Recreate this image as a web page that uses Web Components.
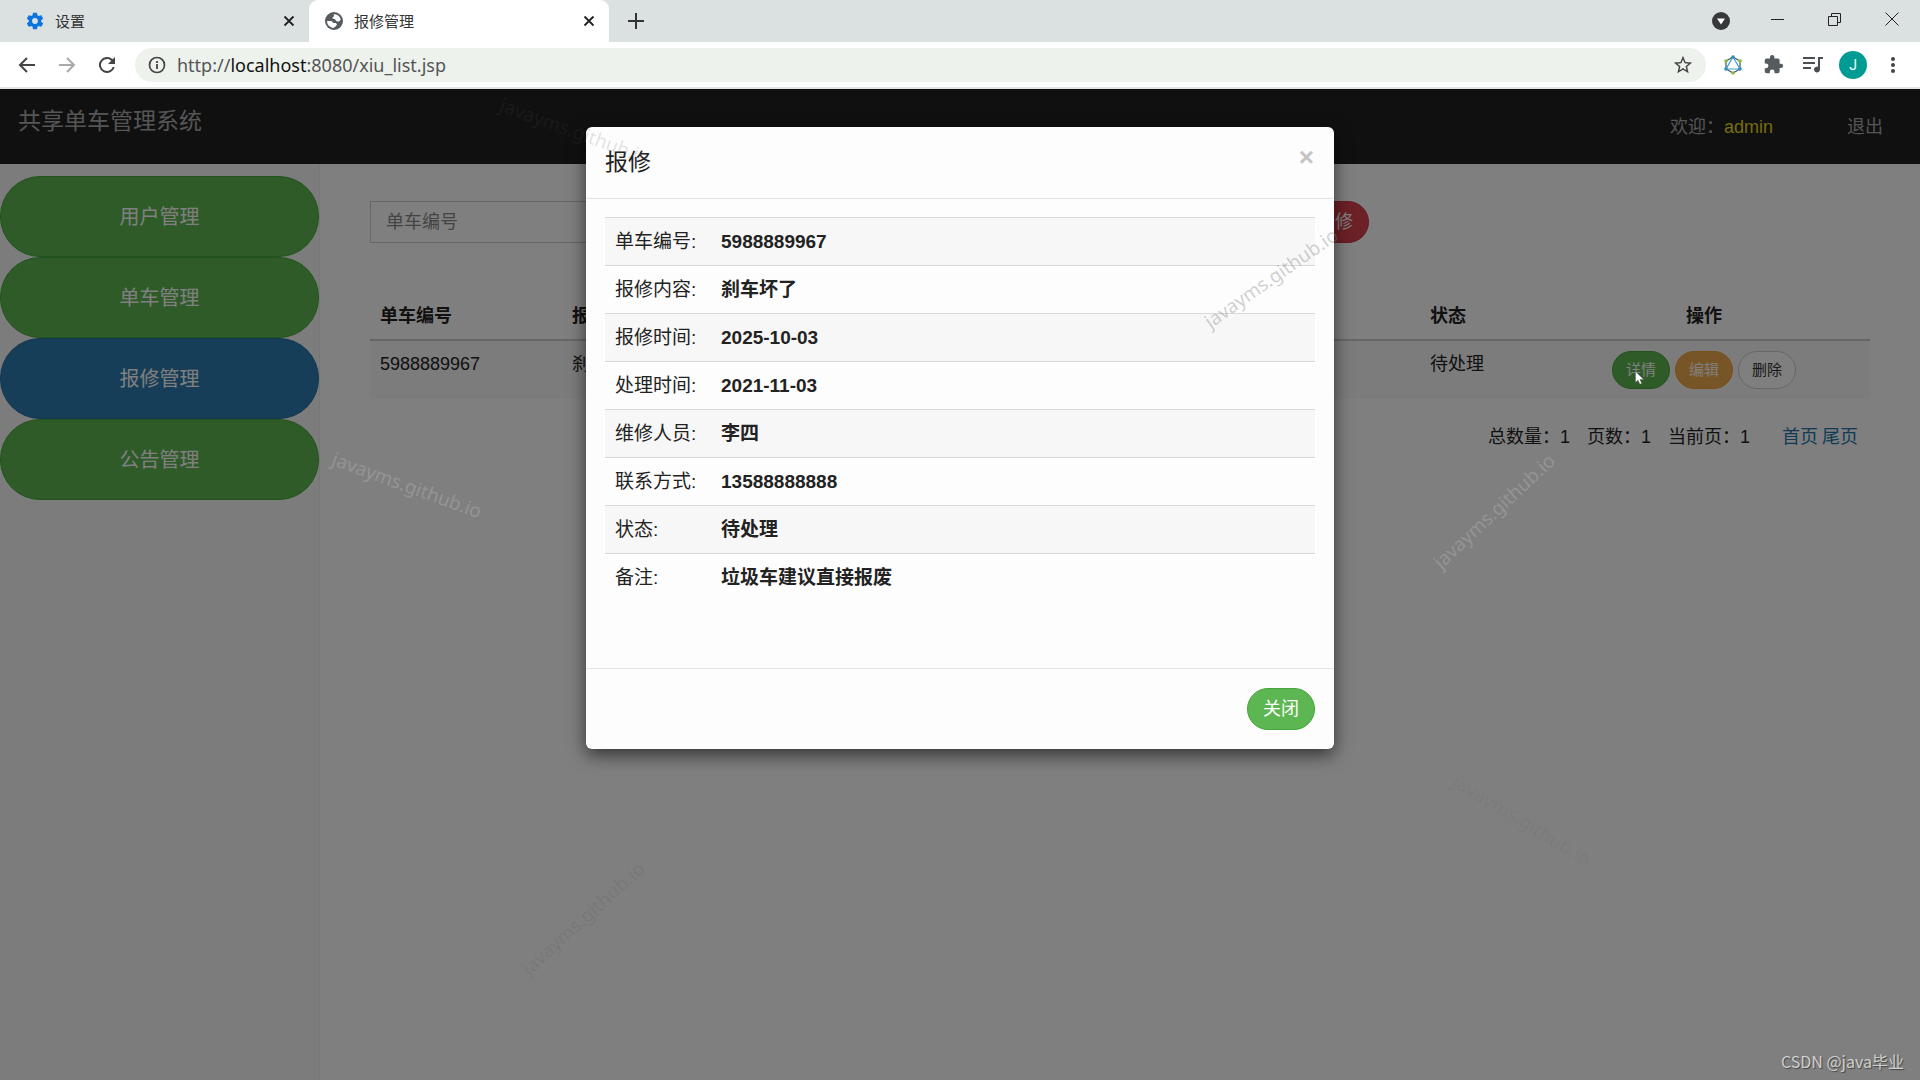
<!DOCTYPE html>
<html lang="zh-CN">
<head>
<meta charset="utf-8">
<title>报修管理</title>
<style>
  body {
    margin: 0;
    font-family: "Liberation Sans", "Noto Sans CJK SC", sans-serif;
    font-size: 18px;
    line-height: 26px;
    color: #222;
  }
</style>
</head>
<body>
<browser-window>
  <browser-tabs slot="tabs"></browser-tabs>
  <browser-toolbar slot="toolbar"></browser-toolbar>
  <bike-app>
    <top-bar slot="top" user="admin">共享单车管理系统</top-bar>
    <side-menu slot="side">
      <menu-item>用户管理</menu-item>
      <menu-item>单车管理</menu-item>
      <menu-item active>报修管理</menu-item>
      <menu-item>公告管理</menu-item>
    </side-menu>
    <search-bar></search-bar>
    <repair-list></repair-list>
    <page-nav></page-nav>
  </bike-app>
  <modal-dialog slot="modal" heading="报修">
    <repair-detail></repair-detail>
  </modal-dialog>
</browser-window>
<water-marks></water-marks>

<script>
const BUTTON_CSS = /* html */`
  button {
    font: inherit;
    color: #fff;
    background: #5cb651;
    border: 1px solid #44a63a;
    border-radius: 22px;
    padding: 7px 15px;
    line-height: 26px;
    cursor: pointer;
  }
`;

// Clase base: crea el shadow root a partir del método html()
class BaseElement extends HTMLElement {
  constructor() {
    super();
    this.attachShadow({ mode: "open" });
  }

  connectedCallback() {
    const template = document.createElement("template");
    template.innerHTML = this.html();
    this.shadowRoot.replaceChildren(template.content.cloneNode(true));
  }
}

class BrowserWindow extends BaseElement {
  html() {
    return /* html */`
      <style>
        :host { display: flex; flex-direction: column; min-height: 100vh; }
        .page { position: relative; flex: 1; display: flex; flex-direction: column; }
        .page ::slotted(bike-app) { flex: 1; }
        .backdrop {
          position: absolute;
          inset: 0;
          background: rgba(0, 0, 0, .5);
          padding-top: 38px;
        }
      </style>
      <slot name="tabs"></slot>
      <slot name="toolbar"></slot>
      <div class="page">
        <slot></slot>
        <div class="backdrop"><slot name="modal"></slot></div>
      </div>
    `;
  }
}

class BrowserTabs extends BaseElement {
  html() {
    const close = `<button aria-label="关闭标签页"><svg width="12" height="12" viewBox="0 0 12 12"><path d="M1.500 1.500l9 9m0-9l-9 9" stroke="#222" stroke-width="1.800" fill="none"/></svg></button>`;
    return /* html */`
      <style>
        :host {
          display: flex;
          height: 42px;
          background: #dbe1e1;
          font: 15px/20px "Noto Sans", "Noto Sans CJK SC", sans-serif;
          color: #333;
        }
        svg { display: block; }
        button { border: 0; padding: 0; background: none; display: grid; place-items: center; }
        .tab { display: flex; align-items: center; box-sizing: border-box; padding: 0 14px 0 15px; gap: 10px; }
        .tab span { flex: 1; }
        .tab svg { flex: none; }
        .idle { width: 309px; padding-left: 25px; }
        .active { width: 300px; background: #fff; border-radius: 9px 9px 0 0; }
        .new { width: 54px; }
        .window { margin-left: auto; display: flex; align-items: center; }
        .window button { width: 57px; height: 36px; }
      </style>
      <div class="tab idle">
        <svg width="20" height="20" viewBox="0 0 24 24"><path fill="#0b74de" d="M19.430 12.980c.040-.320.070-.640.070-.980s-.030-.660-.070-.980l2.110-1.650c.190-.150.240-.420.120-.640l-2-3.460c-.120-.220-.390-.300-.610-.220l-2.490 1c-.520-.400-1.080-.730-1.690-.980l-.380-2.650C14.460 2.180 14.250 2 14 2h-4c-.250 0-.460.180-.490.420l-.380 2.650c-.610.250-1.170.590-1.690.980l-2.490-1c-.230-.090-.490 0-.610.220l-2 3.460c-.130.220-.070.490.120.640l2.110 1.650c-.040.320-.070.650-.070.980s.030.660.070.980l-2.110 1.650c-.190.150-.240.420-.120.640l2 3.460c.120.220.390.300.610.220l2.490-1c.520.400 1.080.730 1.690.980l.380 2.650c.030.240.240.420.490.420h4c.250 0 .460-.180.490-.420l.380-2.650c.610-.250 1.170-.590 1.690-.980l2.490 1c.230.090.490 0 .610-.220l2-3.460c.120-.220.070-.490-.120-.640l-2.110-1.650zM12 15.500A3.500 3.500 0 1 1 12 8.500a3.500 3.500 0 0 1 0 7z"/></svg>
        <span>设置</span>${close}
      </div>
      <div class="tab active">
        <svg width="20" height="20" viewBox="0 0 20 20"><circle cx="10" cy="10" r="9" fill="#555b5e"/><path fill="#fff" d="M3 10h4.500l2 2H12l1 1.500-1.500 2L9.500 17A7 7 0 0 1 3 10zM9.500 3.200a7 7 0 0 1 7.300 5.300l-1.800 2-2.500-.300-1.500-2L8.500 7.500 8.800 6l1.500-.800z"/></svg>
        <span>报修管理</span>${close}
      </div>
      <button class="new" aria-label="新标签页"><svg width="16" height="16" viewBox="0 0 16 16"><path d="M8 0v16M0 8h16" stroke="#333" stroke-width="2"/></svg></button>
      <div class="window">
        <button aria-label="搜索标签页"><svg width="18" height="18" viewBox="0 0 18 18"><circle cx="9" cy="9" r="9" fill="#36393c"/><path d="M5 6.500h8L9 12.500z" fill="#fff"/></svg></button>
        <button aria-label="最小化"><svg width="14" height="14" viewBox="0 0 14 14"><path d="M0 5.500h13" stroke="#222"/></svg></button>
        <button aria-label="还原"><svg width="14" height="16" viewBox="0 0 14 16"><path d="M.5 3.500h9v9h-9zM3.500 3V.5h9v9H10" fill="none" stroke="#222"/></svg></button>
        <button aria-label="关闭"><svg width="14" height="18" viewBox="0 0 14 18"><path d="M.5.5l13 13m0-13l-13 13" stroke="#222"/></svg></button>
      </div>
    `;
  }
}

class BrowserToolbar extends BaseElement {
  html() {
    return /* html */`
      <style>
        :host {
          display: flex;
          align-items: center;
          height: 45px;
          padding: 0 7px;
          background: #fff;
          border-bottom: 2px solid #e2e4e4;
          font: 18px/24px "Noto Sans", "Noto Sans CJK SC", sans-serif;
        }
        svg { display: block; }
        button { width: 40px; height: 34px; border: 0; padding: 0; background: none; display: grid; place-items: center; }
        .address {
          flex: 1;
          display: flex;
          align-items: center;
          height: 34px;
          margin: 0 7px 0 8px;
          padding-left: 13px;
          background: #edf2ed;
          border-radius: 17px;
        }
        .url { flex: 1; margin-left: 11px; color: #555; }
        .url b { font-weight: 400; color: #111; }
        .address button { width: 46px; }
        .avatar { width: 28px; height: 28px; border-radius: 50%; background: #009c94; color: #fff; font: 14px/28px Roboto, sans-serif; text-align: center; }
      </style>
      <button aria-label="后退"><svg width="18" height="18" viewBox="0 0 18 18"><path d="M17 9H2m7-7L2 9l7 7" fill="none" stroke="#444" stroke-width="2"/></svg></button>
      <button aria-label="前进"><svg width="18" height="18" viewBox="0 0 18 18"><path d="M1 9h15M9 2l7 7-7 7" fill="none" stroke="#aaa" stroke-width="2"/></svg></button>
      <button aria-label="刷新"><svg width="24" height="24" viewBox="0 0 24 24"><path fill="#444" d="M17.650 6.350A8 8 0 1 0 19.730 14h-2.080A6 6 0 1 1 12 6c1.660 0 3.140.690 4.220 1.780L13 11h7V4z"/></svg></button>
      <div class="address">
        <svg width="18" height="18" viewBox="0 0 18 18"><circle cx="9" cy="9" r="7.500" fill="none" stroke="#444" stroke-width="1.700"/><path d="M9 8v5M9 5v2" stroke="#444" stroke-width="1.800"/></svg>
        <span class="url">http://<b>localhost</b>:8080/xiu_list.jsp</span>
        <button aria-label="收藏"><svg width="22" height="22" viewBox="0 0 24 24"><path fill="#444" d="M22 9.240l-7.190-.620L12 2 9.190 8.630 2 9.240l5.460 4.730L5.820 21 12 17.270 18.180 21l-1.630-7.030zM12 15.400l-3.760 2.270 1-4.280-3.320-2.880 4.380-.380L12 6.100l1.710 4.040 4.380.380-3.320 2.880 1 4.280z"/></svg></button>
      </div>
      <button aria-label="扩展"><svg width="20" height="20" viewBox="0 0 20 20"><path d="M10 2l7 4v8l-7 4-7-4V6z" fill="none" stroke="#43515c" stroke-width="1.200"/><path d="M10 2l7 12H3z" fill="none" stroke="#3a9fd0" stroke-width="1.200"/><g fill="#2b8fc4"><circle cx="10" cy="2" r="1.800"/><circle cx="3" cy="14" r="1.800"/><circle cx="17" cy="14" r="1.800"/></g><g fill="#83bf3f"><circle cx="3" cy="6" r="1.800"/><circle cx="17" cy="6" r="1.800"/><circle cx="10" cy="18" r="1.800"/></g></svg></button>
      <button aria-label="扩展程序"><svg width="21" height="21" viewBox="0 0 24 24"><path fill="#555b5e" d="M20.500 11H19V7a2 2 0 0 0-2-2h-4V3.500a2.500 2.500 0 0 0-5 0V5H4a2 2 0 0 0-2 2v3.800h1.500a2.700 2.700 0 0 1 0 5.400H2V20a2 2 0 0 0 2 2h3.800v-1.500a2.700 2.700 0 0 1 5.400 0V22H17a2 2 0 0 0 2-2v-4h1.500a2.500 2.500 0 0 0 0-5z"/></svg></button>
      <button aria-label="媒体控件"><svg width="20" height="18" viewBox="0 0 20 18"><path d="M0 2h12M0 7h12M0 12h8" stroke="#4a4f52" stroke-width="2"/><path d="M20 1v2h-3v10.500a3 3 0 1 1-2-2.800V1z" fill="#4a4f52"/></svg></button>
      <button aria-label="用户"><div class="avatar">J</div></button>
      <button aria-label="更多"><svg width="4" height="18" viewBox="0 0 4 18"><g fill="#444"><circle cx="2" cy="3" r="2"/><circle cx="2" cy="9" r="2"/><circle cx="2" cy="15" r="2"/></g></svg></button>
    `;
  }
}

class BikeApp extends BaseElement {
  html() {
    return /* html */`
      <style>
        :host { display: flex; flex-direction: column; background: #fff; }
        .body { flex: 1; display: flex; }
        main { flex: 1; padding: 37px 50px 0; }
      </style>
      <slot name="top"></slot>
      <div class="body">
        <slot name="side"></slot>
        <main><slot></slot></main>
      </div>
    `;
  }
}

class TopBar extends BaseElement {
  html() {
    return /* html */`
      <style>
        :host {
          display: flex;
          justify-content: space-between;
          height: 75px;
          padding: 0 37px 0 18px;
          background: #202020;
          color: #aaa;
        }
        .brand { font-size: 23px; line-height: 64px; }
        .user { display: flex; gap: 74px; line-height: 76px; }
        a { color: inherit; text-decoration: none; }
        b { font-weight: 400; color: #e8d820; }
      </style>
      <span class="brand"><slot></slot></span>
      <div class="user">
        <span>欢迎：<b>${this.getAttribute("user")}</b></span>
        <a href="#">退出</a>
      </div>
    `;
  }
}

class SideMenu extends BaseElement {
  html() {
    return /* html */`
      <style>
        :host {
          display: flex;
          flex-direction: column;
          box-sizing: border-box;
          width: 320px;
          padding-top: 12px;
          background: #f8f8f8;
          border-right: 1px solid #eee;
        }
      </style>
      <slot></slot>
    `;
  }
}

class MenuItem extends BaseElement {
  html() {
    return /* html */`
      <style>
        :host { display: block; }
        a {
          display: block;
          border: 1px solid #44a63a;
          border-radius: 40px;
          background: #5eb650;
          color: #fff;
          font-size: 20px;
          line-height: 77px;
          padding-top: 2px;
          text-align: center;
          text-decoration: none;
        }
        :host([active]) a { background: #2c7cb0; border-color: #2670a0; }
      </style>
      <a href="#"><slot></slot></a>
    `;
  }
}

class SearchBar extends BaseElement {
  html() {
    return /* html */`
      <style>
        :host { display: flex; justify-content: space-between; width: 999px; }
        ${BUTTON_CSS}
        button { background: #d9434f; border-color: #cc3644; }
        input {
          box-sizing: border-box;
          width: 320px;
          height: 42px;
          padding: 0 15px;
          border: 1px solid #ccc;
          font: inherit;
        }
        input::placeholder { color: #888; }
      </style>
      <input type="text" placeholder="单车编号" aria-label="单车编号">
      <button>报修</button>
    `;
  }
}

class RepairList extends BaseElement {
  html() {
    return /* html */`
      <style>
        :host { display: block; margin-top: 50px; }
        table { width: 100%; border-collapse: collapse; table-layout: fixed; }
        th, td { padding: 10px; text-align: left; vertical-align: top; }
        th { border-bottom: 2px solid #ccc; }
        td { background: #f9f9f9; }
        .id { width: 172px; }
        .state { width: 98px; }
        .actions { width: 312px; text-align: center; }
        ${BUTTON_CSS}
        button { font-size: 15px; line-height: 24px; padding: 6px 13px; border-radius: 19px; }
        .edit { background: #f0ab4c; border-color: #eea236; }
        .delete { background: #fff; border-color: #ccc; color: #333; }
        .group { display: flex; justify-content: center; gap: 5px; }
      </style>
      <table>
        <thead>
          <tr><th class="id">单车编号</th><th>报修内容</th><th class="state">状态</th><th class="actions">操作</th></tr>
        </thead>
        <tbody>
          <tr>
            <td>5988889967</td><td>刹车坏了</td><td>待处理</td>
            <td><div class="group"><button>详情</button><button class="edit">编辑</button><button class="delete">删除</button></div></td>
          </tr>
        </tbody>
      </table>
    `;
  }
}

class PageNav extends BaseElement {
  html() {
    return /* html */`
      <style>
        :host { display: flex; justify-content: flex-end; gap: 17px; padding: 25px 12px 0 0; }
        nav { display: flex; gap: 4px; padding-left: 15px; }
        a { color: #2277a8; text-decoration: none; }
      </style>
      <span>总数量：1</span>
      <span>页数：1</span>
      <span>当前页：1</span>
      <nav><a href="#">首页</a><a href="#">尾页</a></nav>
    `;
  }
}

class ModalDialog extends BaseElement {
  html() {
    return /* html */`
      <style>
        :host {
          display: block;
          width: 748px;
          margin: 0 auto;
          background: #fdfdfd;
          border-radius: 6px;
          box-shadow: 0 6px 18px rgba(0, 0, 0, .6);
        }
        header, footer { display: flex; justify-content: space-between; padding: 19px; }
        header { border-bottom: 1px solid #e5e5e5; }
        h4 { margin: 0; font-size: 23px; line-height: 33px; font-weight: 400; }
        .close { border: 0; padding: 0 1px; background: none; color: #c4c4c4; font: bold 26px/22px "Liberation Sans", sans-serif; align-self: flex-start; }
        section { padding: 18px 19px 67px; }
        footer { border-top: 1px solid #e5e5e5; justify-content: flex-end; }
        footer ${BUTTON_CSS}
      </style>
      <header><h4>${this.getAttribute("heading")}</h4><button class="close" aria-label="关闭">×</button></header>
      <section><slot></slot></section>
      <footer><button>关闭</button></footer>
    `;
  }
}

class RepairDetail extends BaseElement {
  #rows = [
    ["单车编号", "5988889967"],
    ["报修内容", "刹车坏了"],
    ["报修时间", "2025-10-03"],
    ["处理时间", "2021-11-03"],
    ["维修人员", "李四"],
    ["联系方式", "13588888888"],
    ["状态", "待处理"],
    ["备注", "垃圾车建议直接报废"],
  ];

  html() {
    return /* html */`
      <style>
        :host { display: block; font-size: 19px; }
        table { width: 100%; border-collapse: collapse; }
        th, td { padding: 10px; line-height: 27px; text-align: left; border-top: 1px solid #d8d8d8; }
        th { width: 86px; font-weight: 400; }
        td { font-weight: 700; }
        tr:nth-child(odd) { background: #f7f7f7; }
      </style>
      <table>
        ${this.#rows.map(([label, value]) => `<tr><th scope="row">${label}:</th><td>${value}</td></tr>`).join("")}
      </table>
    `;
  }
}

// Marcas de agua y cursor, por encima de todo lo demás
class WaterMarks extends BaseElement {
  #marks = [
    [575, 131, 20, "rgba(80, 80, 80, .16)"],
    [407, 485, 20, "rgba(255, 255, 255, .18)"],
    [1271, 278, -35, "rgba(120, 120, 120, .35)"],
    [1494, 511, -43, "rgba(255, 255, 255, .18)"],
    [583, 918, -42, "rgba(0, 0, 0, .08)"],
    [1522, 820, 31, "rgba(0, 0, 0, .05)"],
  ];

  html() {
    return /* html */`
      <style>
        :host { position: absolute; inset: 0; overflow: hidden; pointer-events: none; }
        span { position: absolute; transform-origin: center; font: 19px/26px "Noto Sans", sans-serif; white-space: nowrap; }
        .credit {
          right: 16px;
          bottom: 7px;
          color: #d0d0d0;
          font: 16px/24px "Noto Sans CJK SC", sans-serif;
          text-shadow: 1px 1px 1px #444;
        }
        svg { position: absolute; left: 1635px; top: 371px; }
      </style>
      ${this.#marks.map(([x, y, angle, color]) => `<span style="left:${x}px;top:${y}px;color:${color};transform:translate(-50%,-50%) rotate(${angle}deg)">javayms.github.io</span>`).join("")}
      <svg width="10" height="14" viewBox="0 0 10 14"><path fill="#fff" stroke="#555" stroke-width=".5" d="M.5.5v11l2.500-2.300 1.800 4.100 2-.900L5 8.400h3.800z"/></svg>
      <span class="credit">CSDN @java毕业</span>
    `;
  }
}

customElements.define("browser-window", BrowserWindow);
customElements.define("browser-tabs", BrowserTabs);
customElements.define("browser-toolbar", BrowserToolbar);
customElements.define("bike-app", BikeApp);
customElements.define("top-bar", TopBar);
customElements.define("side-menu", SideMenu);
customElements.define("menu-item", MenuItem);
customElements.define("search-bar", SearchBar);
customElements.define("repair-list", RepairList);
customElements.define("page-nav", PageNav);
customElements.define("modal-dialog", ModalDialog);
customElements.define("repair-detail", RepairDetail);
customElements.define("water-marks", WaterMarks);
</script>
</body>
</html>
